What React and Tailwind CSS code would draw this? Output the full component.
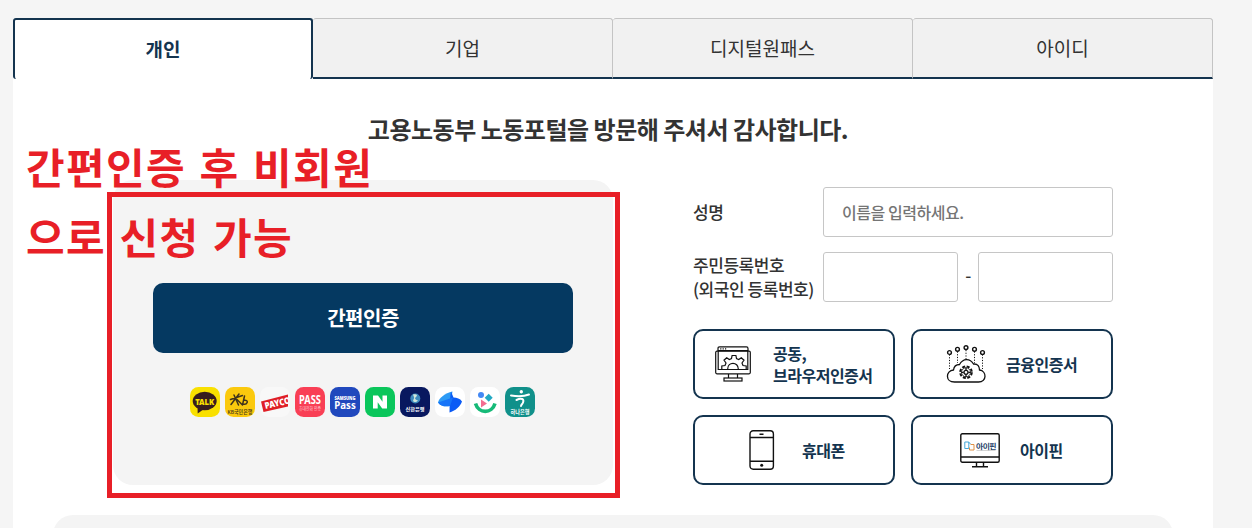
import React from "react";

const tabs = ["개인", "기업", "디지털원패스", "아이디"];

// --- Tab ---
const Tab = ({ label, active }) => (
  <button
    className={`w-[300px] h-[61px] text-[19px] ${
      active
        ? "bg-white rounded-[3px] border-2 border-b-0 border-[#14344f] text-[#14344f] font-bold"
        : "bg-[#f1f1f1] rounded-t-[3px] border border-l-0 border-[#c4c4c4] border-b-2 border-b-[#14344f] text-[#333]"
    }`}
  >
    {label}
  </button>
);

// --- Provider icons ---
const AppIcon = ({ bg, children }) => (
  <svg className="w-[30px] h-[30px]" viewBox="0 0 30 30" fontFamily="'Noto Sans', 'Noto Sans CJK KR', sans-serif" textAnchor="middle">
    <rect width="30" height="30" rx="8.5" fill={bg} />
    {children}
  </svg>
);

const Providers = () => (
  <div className="mt-[34px] flex justify-center gap-[5px] pr-[1px]">
    <AppIcon bg="#f9e000">
      <ellipse cx="14.7" cy="14" rx="12" ry="9.2" fill="#371d1e" />
      <path d="M7.5 19l.2 7.500 7-5z" fill="#371d1e" />
      <text x="14.7" y="17.500" fontSize="9" fontWeight="900" fill="#f9e000" textLength="19" lengthAdjust="spacingAndGlyphs">TALK</text>
    </AppIcon>
    <AppIcon bg="#fbc90d">
      <path d="M5.500 12.500L17.500 8.500M9 8l4.500 10M14 7L6 17.500M12 12.500l5.500 5.500M19.500 9l-1.800 8c4.500 1.500 7-4.500 1.200-3.800" fill="none" stroke="#40331c" strokeWidth="1.500" strokeLinecap="round" />
      <text x="15" y="26.500" fontSize="5.500" fontWeight="500" fill="#40331c" textLength="25" lengthAdjust="spacingAndGlyphs">KB국민은행</text>
    </AppIcon>
    <svg className="w-[30px] h-[30px]" viewBox="0 0 30 30">
      <clipPath id="payco"><rect x=".5" width="27.500" height="30" rx="6" /></clipPath>
      <rect width="30" height="30" rx="8.500" fill="#f8f8f8" />
      <g clipPath="url(#payco)">
        <path d="M1 14.500L30 7v12L3.500 25z" fill="#df1f26" />
        <text x="5.500" y="22" transform="rotate(-13 5.5 22)" fontSize="9" fontWeight="900" fontFamily="Noto Sans" fill="#fff" textLength="26" lengthAdjust="spacingAndGlyphs">PAYCO</text>
      </g>
    </svg>
    <AppIcon bg="#f93f55">
      <text x="15" y="16.500" fontSize="11.500" fontWeight="700" fill="#fff" textLength="22" lengthAdjust="spacingAndGlyphs">PASS</text>
      <text x="15" y="23" fontSize="4.500" fill="#ffd0d6" textLength="22" lengthAdjust="spacingAndGlyphs">휴대전화 인증</text>
    </AppIcon>
    <AppIcon bg="#2048bd">
      <text x="15" y="13" fontSize="4.800" fontWeight="900" fill="#fff" textLength="21" lengthAdjust="spacingAndGlyphs">SAMSUNG</text>
      <text x="15" y="21.800" fontSize="9.800" fontWeight="700" fill="#fff" textLength="21.5" lengthAdjust="spacingAndGlyphs">Pass</text>
    </AppIcon>
    <AppIcon bg="#0ac65b">
      <path d="M8 8.500h5l4.500 6.300V8.500h4.500v13h-4.800l-4.500-6.300v6.300H8z" fill="#fff" />
    </AppIcon>
    <AppIcon bg="#08185f">
      <circle cx="15.300" cy="11.500" r="5" fill="#3e8abd" />
      <path d="M13 7.500c4-1 5 1 3 2.500s0 3 2 3.500c-3 3-6 1-4.500-1s0-3-.5-5z" fill="#cfe6da" />
      <text x="15" y="23.500" fontSize="5" fontWeight="700" fill="#fff" textLength="19" lengthAdjust="spacingAndGlyphs">신한은행</text>
    </AppIcon>
    <AppIcon bg="#fff">
      <path d="M17.500 4.500C10 6 4 11 3 15.500c2.500 3.500 7 4.500 12 3.500z" fill="#2d9bf5" />
      <path d="M16 4.500c-1 6-1.500 14-1.500 21C20 24 25.500 19.500 27 14.500c-2-3-5-4-8.500-4z" fill="#0b5bf5" />
      <path d="M3 15.500c2.500 3.500 7 4.500 12 3.500l3-8.500z" fill="#1674f8" />
    </AppIcon>
    <AppIcon bg="#fff">
      <circle cx="11" cy="8" r="3" fill="#4388f4" />
      <path d="M18.700 6.800l4 4-4 4-4-4z" fill="#22a9c3" />
      <path d="M11 12.500l6 4-6 4z" fill="#f46c91" />
      <path d="M5.500 16.500c3 10.500 16.500 10.500 19.500 0" fill="none" stroke="#16ba78" strokeWidth="3.600" />
    </AppIcon>
    <AppIcon bg="#10908a">
      <circle cx="16.300" cy="4.800" r="1.700" fill="#fff" />
      <path d="M6 8.500c6 1 13 1 18-1M11.500 13c5-2.500 8-1 6.500 2.500-.6 1.500-1.500 2-2 3.500" fill="none" stroke="#fff" strokeWidth="2" strokeLinecap="round" />
      <text x="15" y="26.800" fontSize="5.800" fontWeight="700" fill="#fff" textLength="19" lengthAdjust="spacingAndGlyphs">하나은행</text>
    </AppIcon>
  </div>
);

// --- Certificate icons ---
const IconBrowser = () => (
  <svg className="w-9 h-9 shrink-0" viewBox="0 0 36 36" fill="none" stroke="#111" strokeWidth="1.200">
    <path d="M3 5V2.500Q3 .8 4.500 .8h27Q33 .8 33 2.500V5M3 4.700h30" />
    <rect x=".7" y="5.200" width="34.600" height="22.600" rx="1.200" />
    <path d="M3.200 5v18.500h29.600V5M13.500 28v4M22.500 28v4" />
    <rect x="9" y="32" width="18" height="3" />
    <path d="M5.200 2.800h1.200m1.200 0h1.200m1.200 0h1.200" />
    <path d="M6.800 23v-3l3.200-.5 1-2.500-2-2.800 2.700-2.500 2.600 1.800 2.200-.9.600-3.100h3.800l.6 3.100 2.200.9 2.600-1.800 2.700 2.500-2 2.800 1 2.500 3.200.5v3M12.700 23c0-7.500 10.600-7.500 10.600 0" />
  </svg>
);

const IconCloud = () => (
  <svg className="w-[40px] h-[38px] shrink-0" viewBox="0 0 40 38" fill="none" stroke="#111" strokeWidth="1.300">
    <path d="M8.500 37C-1 37-.5 25.500 7.500 25c.5-4 2.500-5.500 6-5.500 3.500-6.500 10.500-6.500 14-.5 4.500-.3 6 2.500 6 6C41 26 41 37 32.500 37z" />
    <path d="M3.500 9.500V24M11.500 6.500V18M20 5v9M28.500 6.500V18M36.500 9.500V24" strokeDasharray="1.200 1.500" strokeWidth="1" />
    <g strokeWidth="1.400">
      <circle cx="3.500" cy="7.500" r="1.900" />
      <circle cx="11.500" cy="4.300" r="1.900" />
      <circle cx="20" cy="2.600" r="1.900" />
      <circle cx="28.500" cy="4.300" r="1.900" />
      <circle cx="36.500" cy="7.500" r="1.900" />
    </g>
    <circle cx="20" cy="27.300" r="5.800" strokeWidth="2" strokeDasharray="3 1.550" />
    <circle cx="20" cy="27.300" r="4.500" strokeWidth=".8" />
    <circle cx="20" cy="27.300" r="2" />
    <path d="M20 22.500v2.500M20 29.500V32M15.200 27.300h2.500M22.300 27.300h2.500" />
  </svg>
);

const IconPhone = () => (
  <svg className="w-[26px] h-[40px] shrink-0" viewBox="0 0 26 40" fill="none" stroke="#111" strokeWidth="1.400">
    <rect x="1" y=".8" width="23.400" height="38.400" rx="3.200" />
    <path d="M1 7.500h23.400M1 31.300h23.400M10.500 4.300h4" />
    <circle cx="12.700" cy="35.300" r="1.500" fill="#111" stroke="none" />
  </svg>
);

const IconIpin = () => (
  <svg className="w-10 h-[35px] shrink-0" viewBox="0 0 40 35" fill="none" stroke="#111" strokeWidth="1.400">
    <rect x=".8" y=".8" width="38.400" height="28.400" rx="1.500" />
    <path d="M1 24h38M16.500 29.500v3.500M23.500 29.500v3.500M12 33.800h16" />
    <path d="M4.800 9h4v6.500h-4zM8.500 9l2 2" stroke="#45a7d9" strokeWidth="1" />
    <path d="M14 11.500V17H9.500v-2.500M10.500 11.500H14" stroke="#df9045" strokeWidth="1" />
    <text x="16" y="15.500" fontSize="7" fontWeight="700" stroke="none" fill="#263f68" fontFamily="Noto Sans CJK KR" textLength="20" lengthAdjust="spacingAndGlyphs">아이핀</text>
    <path d="M16.500 17.500h19" stroke="#aaa" strokeWidth=".5" />
  </svg>
);

const CertButton = ({ icon, className = "", children }) => (
  <button
    className={`flex items-center h-[70px] rounded-[10px] border-2 border-[#14344f] bg-white text-left text-[16px] leading-[22px] font-bold tracking-[-0.500px] text-[#14344f] whitespace-nowrap ${className}`}
  >
    {icon}
    <span>{children}</span>
  </button>
);

const inputStyle =
  "h-[50px] min-w-0 rounded-[3px] border border-[#c6c6c6] bg-white px-[18px] text-[16px] tracking-[-0.450px] placeholder:text-[#757575]";

// --- Form on the right ---
const PersonForm = () => (
  <div className="w-[420px] mt-[7px] text-[#333] text-[17px] tracking-[-0.450px] font-medium">
    <div className="flex items-center">
      <label className="w-[130px]">성명</label>
      <input className={`flex-1 ${inputStyle}`} placeholder="이름을 입력하세요." />
    </div>
    <div className="mt-[15px] flex items-center">
      <label className="w-[130px] leading-6 whitespace-nowrap">
        주민등록번호
        <br />
        (외국인 등록번호)
      </label>
      <input className={`w-[135px] ${inputStyle}`} />
      <span className="flex-1 text-center -mt-1">-</span>
      <input className={`w-[135px] ${inputStyle}`} />
    </div>
    <div className="mt-[27px] grid grid-cols-2 gap-4">
      <CertButton icon={<IconBrowser />} className="pl-5 gap-[22px]">
        공동,
        <br />
        브라우저인증서
      </CertButton>
      <CertButton icon={<IconCloud />} className="pl-[33px] gap-5">
        금융인증서
      </CertButton>
      <CertButton icon={<IconPhone />} className="pl-[54px] gap-[27px]">
        휴대폰
      </CertButton>
      <CertButton icon={<IconIpin />} className="pl-[47px] gap-5">
        아이핀
      </CertButton>
    </div>
  </div>
);

export default function App() {
  return (
    <div className="relative h-[528px] overflow-hidden bg-[#f5f5f5] pt-[18px] pl-[13px] font-['Noto_Sans_CJK_KR',sans-serif]">
      <div className="w-[1200px] h-[520px] bg-white">
        <div className="flex">
          {tabs.map((label, i) => (
            <Tab key={label} label={label} active={i === 0} />
          ))}
        </div>
        <h1 className="mt-8 h-9 leading-9 text-center text-[24px] font-bold tracking-[-0.5px] text-[#333] pr-[10px]">
          고용노동부 노동포털을 방문해 주셔서 감사합니다.
        </h1>
        <div className="mt-[33px] px-[100px] flex justify-between items-start">
          <div className="w-[500px] h-[305px] rounded-[20px] bg-[#f4f4f4] pt-[103px] px-10">
            <button className="block w-full h-[70px] rounded-[10px] bg-[#053961] text-[20px] font-bold tracking-[-0.500px] text-white">
              간편인증
            </button>
            <Providers />
          </div>
          <PersonForm />
        </div>
        <div className="mt-[30px] mx-10 h-20 rounded-[20px] bg-[#f4f4f4]" />
      </div>

      {/* red callout over the page */}
      <div className="absolute left-[107px] top-[192px] w-[513px] h-[306px] border-[5px] border-[#e81f27]" />
      <p className="absolute left-[26px] top-[131px] text-[42px] leading-[70px] font-bold tracking-[1.400px] [word-spacing:2.500px] text-[#e81f27] whitespace-nowrap">
        간편인증 후 비회원
        <br />
        으로 신청 가능
      </p>
    </div>
  );
}
